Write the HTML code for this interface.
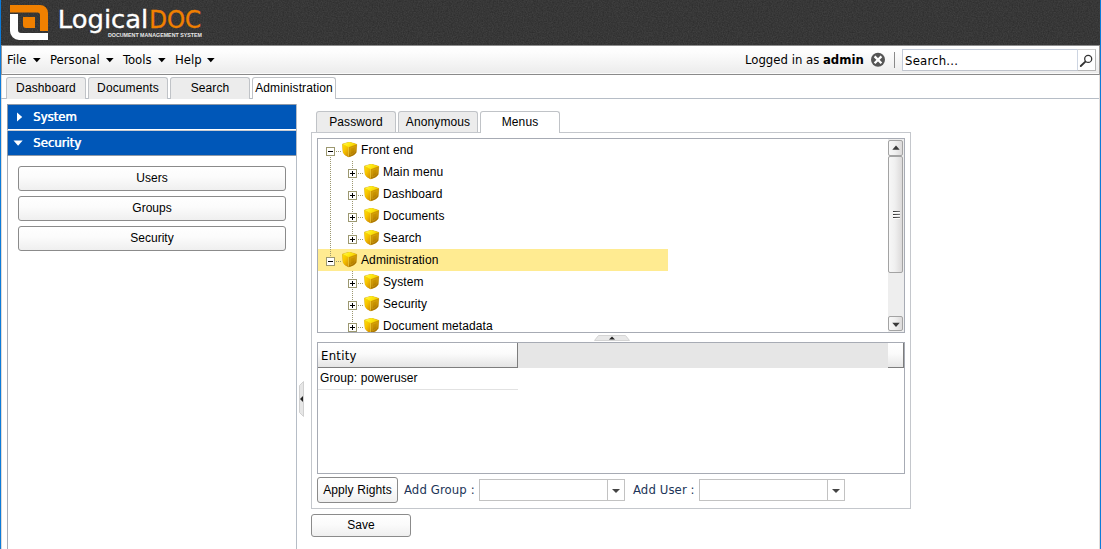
<!DOCTYPE html>
<html>
<head>
<meta charset="utf-8">
<title>LogicalDOC</title>
<style>
html,body{margin:0;padding:0;}
body{width:1101px;height:549px;overflow:hidden;background:#fff;position:relative;
  font-family:"Liberation Sans",Arial,sans-serif;font-size:12px;color:#000;}
.abs{position:absolute;box-sizing:border-box;}
.tah{font-family:"DejaVu Sans Condensed","DejaVu Sans","Liberation Sans",sans-serif;}
#edgeL{left:0;top:0;width:1px;height:549px;background:#0c7bd9;}
#edgeR{left:1100px;top:0;width:1px;height:549px;background:#0c7bd9;}
#hdr{left:1px;top:0;width:1099px;height:45px;background:#373737;}
#menubar{left:1px;top:45px;width:1099px;height:30px;border-top:1px solid #8c8c8c;background:linear-gradient(#ffffff 0%,#fcfcfc 25%,#f4f4f4 62%,#ececec 96%,#fafafa 97%,#fafafa 100%);border-bottom:1px solid #8a8a8a;}
.mi{top:52px;font-size:13px;line-height:15px;white-space:nowrap;color:#000;}
.arr{width:0;height:0;border-left:3.5px solid transparent;border-right:3.5px solid transparent;border-top:4px solid #000;}
.tab{letter-spacing:0.12px;height:22px;border:1px solid #c0c3c7;border-bottom:none;border-radius:3px 3px 0 0;background:#ececec;text-align:center;font-size:12px;line-height:21px;white-space:nowrap;}
.tab.sel{background:#fff;}
.btn{border:1px solid #8b8b8b;border-radius:3px;background:linear-gradient(#ffffff 0%,#fbfbfb 45%,#efefef 100%);text-align:center;font-size:12px;white-space:nowrap;}
.sec{left:7px;width:289px;background:#0057b8;color:#fff;font-size:13px;line-height:24px;border-left:1px solid #8e99a8;}
.sec span{position:absolute;left:25px;top:0;text-shadow:0.6px 0 0 #fff;}
.row{left:318px;width:570px;height:22px;}
.tl{letter-spacing:0.1px;font-size:12px;line-height:22px;white-space:nowrap;}
.op{width:9px;height:9px;border:1px solid #9c9870;background:#fff;}
.op i{position:absolute;left:1px;top:3px;width:5px;height:1px;background:#000;}
.op b{position:absolute;left:3px;top:1px;width:1px;height:5px;background:#000;}
.dv{width:1px;background:repeating-linear-gradient(180deg,#9c9870 0,#9c9870 1px,transparent 1px,transparent 2px);}
.dh{height:1px;background:repeating-linear-gradient(90deg,#9c9870 0,#9c9870 1px,transparent 1px,transparent 2px);}
</style>
</head>
<body>
<div class="abs" id="edgeL"></div>
<div class="abs" id="edgeR"></div>
<div class="abs" style="left:1099px;top:0;width:1px;height:549px;background:#e2dcd9"></div>
<div class="abs" style="left:1px;top:46px;width:1px;height:503px;background:#e0d9d5"></div>
<div class="abs" id="hdr"></div>
<svg class="abs" style="left:1px;top:0" width="1099" height="45"><filter id="nz" x="0" y="0" width="100%" height="100%" color-interpolation-filters="sRGB"><feTurbulence type="fractalNoise" baseFrequency="0.8" numOctaves="2" seed="3"/><feColorMatrix type="matrix" values="0.11 0 0 0 0.162  0.11 0 0 0 0.162  0.11 0 0 0 0.162  0 0 0 0 1"/></filter><rect width="1099" height="45" fill="#373737"/><rect width="1099" height="45" filter="url(#nz)"/></svg>
<svg class="abs" style="left:0;top:0" width="220" height="45" viewBox="0 0 220 45">
<path d="M10 5 H40 A8 8 0 0 1 48 13 V31 H40 V15 A2.5 2.5 0 0 0 37.5 12.5 H10 Z" fill="#f08000"/>
<path d="M10 14 H18 V30 A3 3 0 0 0 21 33 H48 V40 H19 A9 9 0 0 1 10 31 Z" fill="#ffffff"/>
<path d="M23 17 H35 V28 H26 A3 3 0 0 1 23 25 Z" fill="#f08000"/>
<text x="57.8" y="28.4" font-family="DejaVu Sans, Liberation Sans, sans-serif" font-size="25" fill="#ffffff" stroke="#ffffff" stroke-width="0.35" textLength="90.5" lengthAdjust="spacingAndGlyphs">Logical</text>
<text x="149.2" y="28.4" font-family="DejaVu Sans, Liberation Sans, sans-serif" font-size="25" fill="#f08000" stroke="#f08000" stroke-width="0.35" textLength="52" lengthAdjust="spacingAndGlyphs">DOC</text>
<text x="108" y="37" font-family="Liberation Sans, sans-serif" font-weight="bold" font-size="5.2" fill="#e8e8e8" textLength="94" lengthAdjust="spacingAndGlyphs">DOCUMENT MANAGEMENT SYSTEM</text>
</svg>
<div class="abs" id="menubar"></div>
<div class="abs" style="left:1px;top:46px;width:1px;height:29px;background:#9a9694"></div><div class="abs" style="left:1099px;top:46px;width:1px;height:29px;background:#9a9694"></div>
<div class="abs mi tah" style="left:7px">File</div><svg class="abs" style="left:33px;top:58px" width="8" height="5" viewBox="0 0 8 5"><path d="M0 0 H7.6 L3.8 4.2 Z" fill="#000"/></svg>
<div class="abs mi tah" style="left:50px">Personal</div><svg class="abs" style="left:106px;top:58px" width="8" height="5" viewBox="0 0 8 5"><path d="M0 0 H7.6 L3.8 4.2 Z" fill="#000"/></svg>
<div class="abs mi tah" style="left:123px">Tools</div><svg class="abs" style="left:158px;top:58px" width="8" height="5" viewBox="0 0 8 5"><path d="M0 0 H7.6 L3.8 4.2 Z" fill="#000"/></svg>
<div class="abs mi tah" style="left:175px">Help</div><svg class="abs" style="left:207px;top:58px" width="8" height="5" viewBox="0 0 8 5"><path d="M0 0 H7.6 L3.8 4.2 Z" fill="#000"/></svg>
<div class="abs mi tah" style="left:745px">Logged in as <b>admin</b></div>
<svg class="abs" style="left:870px;top:52px" width="16" height="16" viewBox="0 0 16 16"><circle cx="8" cy="7.8" r="7" fill="#555"/><path d="M4.6 4.4 L11.4 11.2 M11.4 4.4 L4.6 11.2" stroke="#fff" stroke-width="2.3" stroke-linecap="butt"/></svg>
<div class="abs" style="left:894px;top:52px;width:1px;height:16px;background:#8a8a8a"></div>
<div class="abs" style="left:902px;top:49px;width:194px;height:22px;border:1px solid #c3cbd8;border-right-color:#b0b0b0;border-bottom-color:#c0c4cc;background:#fff"></div>
<div class="abs mi tah" style="left:905px;top:53px;letter-spacing:0.2px">Search...</div>
<div class="abs" style="left:1077px;top:49px;width:19px;height:22px;border:1px solid #b4b4b4;border-left-color:#cdd5e2;border-top-color:#cfcfcf;background:#fff"></div>
<svg class="abs" style="left:1078px;top:52px" width="16" height="16" viewBox="0 0 16 16"><circle cx="10.2" cy="6.9" r="3.5" fill="#fff" stroke="#333" stroke-width="1.3"/><path d="M7.4 9.6 L2.8 14" stroke="#333" stroke-width="1.9" stroke-linecap="round"/></svg>

<div class="abs" style="left:1px;top:98px;width:1098px;height:1px;background:#b6bdc6"></div>
<div class="abs tab" style="left:6px;top:77px;width:80px">Dashboard</div>
<div class="abs tab" style="left:88px;top:77px;width:80px">Documents</div>
<div class="abs tab" style="left:170px;top:77px;width:80px">Search</div>
<div class="abs tab sel" style="left:252px;top:77px;width:84px">Administration</div>

<div class="abs" style="left:7px;top:104px;width:290px;height:445px;border-left:1px solid #a9aeb9;border-right:1px solid #b6bdc6"></div>
<div class="abs sec tah" style="top:104px;height:25px;border-top:1px solid #8e99a8"><svg class="abs" style="left:8px;top:6px" width="8" height="12"><path d="M1 1.5 L6.2 6 L1 10.5 Z" fill="#fff"/></svg><span>System</span></div>
<div class="abs" style="left:7px;top:130px;width:289px;height:1px;background:#c8ccd2"></div>
<div class="abs sec tah" style="top:131px;height:25px;border-bottom:1px solid #8e99a8"><svg class="abs" style="left:5px;top:9px" width="11" height="7"><path d="M0.5 0.5 L9.7 0.5 L5.1 5.7 Z" fill="#fff"/></svg><span>Security</span></div>
<div class="abs btn" style="left:18px;top:166px;width:268px;height:25px;line-height:23px">Users</div>
<div class="abs btn" style="left:18px;top:196px;width:268px;height:25px;line-height:23px">Groups</div>
<div class="abs btn" style="left:18px;top:226px;width:268px;height:25px;line-height:23px">Security</div>
<svg class="abs" style="left:298px;top:380px" width="8" height="38" viewBox="0 0 8 38"><path d="M1.5 5.5 L5.5 1.5 V36.5 L1.5 32.5 Z" fill="#e6e6e6" stroke="#d0d0d0" stroke-width="1"/><path d="M5 16 V22 L2 19 Z" fill="#222"/></svg>
<svg width="0" height="0" style="position:absolute"><defs>
<linearGradient id="cl" x1="0" y1="0" x2="0.7" y2="1"><stop offset="0" stop-color="#ffe100"/><stop offset="0.5" stop-color="#f6c300"/><stop offset="1" stop-color="#d99600"/></linearGradient>
<linearGradient id="cr" x1="0" y1="0" x2="0.4" y2="1"><stop offset="0" stop-color="#d9a400"/><stop offset="0.6" stop-color="#c48e00"/><stop offset="1" stop-color="#a06c00"/></linearGradient>
<linearGradient id="ct" x1="0" y1="0" x2="1" y2="0.3"><stop offset="0" stop-color="#fff65e"/><stop offset="0.5" stop-color="#ffec14"/><stop offset="1" stop-color="#f4cc00"/></linearGradient>
<g id="cube"><path d="M0.4 2 L7.4 0 L14.8 2.3 L14.2 10.4 Q12.4 13.6 6.5 15 Q2.2 13.2 1 10.2 Z" fill="#c89000" stroke="#c08c10" stroke-width="0.5" stroke-opacity="0.55"/><path d="M0.4 2 L6.6 5 L6.6 15 Q2.2 13.2 1 10.2 Z" fill="url(#cl)"/><path d="M6.4 5 L14.8 2.3 L14.2 10.4 Q12.4 13.6 6.4 15 Z" fill="url(#cr)"/><path d="M8.2 6.2 L13.4 4.5 L12.9 9.8 Q11.5 12 8.2 13 Z" fill="none" stroke="#e2b425" stroke-width="0.5" opacity="0.7"/><path d="M0.4 2 L7.4 0 L14.8 2.3 L6.5 5.2 Z" fill="url(#ct)"/><path d="M6.5 5.2 V14.6" stroke="#ffe45a" stroke-width="0.7" fill="none" opacity="0.75"/></g>
</defs></svg>

<div class="abs tab" style="left:316px;top:111px;width:80px">Password</div>
<div class="abs tab" style="left:398px;top:111px;width:80px">Anonymous</div>
<div class="abs" style="left:311px;top:132px;width:600px;height:377px;border:1px solid #c4c7cc"></div>
<div class="abs tab sel" style="left:480px;top:111px;width:80px;height:22px">Menus</div>
<div class="abs" id="tree" style="left:317px;top:138px;width:588px;height:195px;border:1px solid #a7abb4;overflow:hidden">
<div class="abs op" style="left:8px;top:8px"><i></i></div>
<svg class="abs" style="left:24px;top:3px" width="16" height="16" viewBox="0 0 16 16"><use href="#cube"/></svg>
<div class="abs tl" style="left:43px;top:0px">Front end</div>
<div class="abs op" style="left:30px;top:30px"><i></i><b></b></div>
<svg class="abs" style="left:46px;top:25px" width="16" height="16" viewBox="0 0 16 16"><use href="#cube"/></svg>
<div class="abs tl" style="left:65px;top:22px">Main menu</div>
<div class="abs op" style="left:30px;top:52px"><i></i><b></b></div>
<svg class="abs" style="left:46px;top:47px" width="16" height="16" viewBox="0 0 16 16"><use href="#cube"/></svg>
<div class="abs tl" style="left:65px;top:44px">Dashboard</div>
<div class="abs op" style="left:30px;top:74px"><i></i><b></b></div>
<svg class="abs" style="left:46px;top:69px" width="16" height="16" viewBox="0 0 16 16"><use href="#cube"/></svg>
<div class="abs tl" style="left:65px;top:66px">Documents</div>
<div class="abs op" style="left:30px;top:96px"><i></i><b></b></div>
<svg class="abs" style="left:46px;top:91px" width="16" height="16" viewBox="0 0 16 16"><use href="#cube"/></svg>
<div class="abs tl" style="left:65px;top:88px">Search</div>
<div class="abs" style="left:0;top:110px;width:350px;height:22px;background:#ffeb91"></div>
<div class="abs op" style="left:8px;top:118px"><i></i></div>
<svg class="abs" style="left:24px;top:113px" width="16" height="16" viewBox="0 0 16 16"><use href="#cube"/></svg>
<div class="abs tl" style="left:43px;top:110px">Administration</div>
<div class="abs op" style="left:30px;top:140px"><i></i><b></b></div>
<svg class="abs" style="left:46px;top:135px" width="16" height="16" viewBox="0 0 16 16"><use href="#cube"/></svg>
<div class="abs tl" style="left:65px;top:132px">System</div>
<div class="abs op" style="left:30px;top:162px"><i></i><b></b></div>
<svg class="abs" style="left:46px;top:157px" width="16" height="16" viewBox="0 0 16 16"><use href="#cube"/></svg>
<div class="abs tl" style="left:65px;top:154px">Security</div>
<div class="abs op" style="left:30px;top:184px"><i></i><b></b></div>
<svg class="abs" style="left:46px;top:179px" width="16" height="16" viewBox="0 0 16 16"><use href="#cube"/></svg>
<div class="abs tl" style="left:65px;top:176px">Document metadata</div>
<div class="abs dh" style="left:18px;top:12px;width:5px"></div>
<div class="abs dh" style="left:40px;top:34px;width:5px"></div>
<div class="abs dh" style="left:40px;top:56px;width:5px"></div>
<div class="abs dh" style="left:40px;top:78px;width:5px"></div>
<div class="abs dh" style="left:40px;top:100px;width:5px"></div>
<div class="abs dh" style="left:18px;top:122px;width:5px"></div>
<div class="abs dh" style="left:40px;top:144px;width:5px"></div>
<div class="abs dh" style="left:40px;top:166px;width:5px"></div>
<div class="abs dh" style="left:40px;top:188px;width:5px"></div>
<div class="abs dv" style="left:12px;top:18px;height:99px"></div>
<div class="abs dv" style="left:34px;top:22px;height:8px"></div>
<div class="abs dv" style="left:34px;top:40px;height:3px"></div>
<div class="abs dv" style="left:34px;top:44px;height:8px"></div>
<div class="abs dv" style="left:34px;top:62px;height:3px"></div>
<div class="abs dv" style="left:34px;top:66px;height:8px"></div>
<div class="abs dv" style="left:34px;top:84px;height:3px"></div>
<div class="abs dv" style="left:34px;top:88px;height:8px"></div>
<div class="abs dv" style="left:34px;top:132px;height:8px"></div>
<div class="abs dv" style="left:34px;top:150px;height:3px"></div>
<div class="abs dv" style="left:34px;top:154px;height:8px"></div>
<div class="abs dv" style="left:34px;top:172px;height:3px"></div>
<div class="abs dv" style="left:34px;top:176px;height:8px"></div>
<div class="abs dv" style="left:34px;top:194px;height:3px"></div>
<div class="abs" style="left:570px;top:0;width:16px;height:193px;background:#eeeeee"></div>
<div class="abs" style="left:570px;top:1px;width:15px;height:16px;border:1px solid #a3a3a3;border-radius:2px;background:linear-gradient(90deg,#f7f7f7 0%,#f0f0f0 45%,#dcdada 100%)"></div>
<svg class="abs" style="left:574px;top:6px" width="8" height="6" viewBox="0 0 8 6"><path d="M0.3 4.8 L4 0.6 L7.7 4.8 Z" fill="#3a3a3a"/></svg>
<div class="abs" style="left:570px;top:17px;width:15px;height:117px;border:1px solid #a3a3a3;border-radius:2px;background:linear-gradient(90deg,#f7f7f7 0%,#f0f0f0 45%,#dcdada 100%)"></div>
<div class="abs" style="left:575px;top:72px;width:7px;height:1px;background:linear-gradient(90deg,#333,#777)"></div>
<div class="abs" style="left:575px;top:73px;width:7px;height:1px;background:#fff"></div>
<div class="abs" style="left:575px;top:75px;width:7px;height:1px;background:linear-gradient(90deg,#333,#777)"></div>
<div class="abs" style="left:575px;top:76px;width:7px;height:1px;background:#fff"></div>
<div class="abs" style="left:575px;top:78px;width:7px;height:1px;background:linear-gradient(90deg,#333,#777)"></div>
<div class="abs" style="left:575px;top:79px;width:7px;height:1px;background:#fff"></div>
<div class="abs" style="left:570px;top:177px;width:15px;height:15px;border:1px solid #a3a3a3;border-radius:2px;background:linear-gradient(90deg,#f7f7f7 0%,#f0f0f0 45%,#dcdada 100%)"></div>
<svg class="abs" style="left:574px;top:183px" width="8" height="6" viewBox="0 0 8 6"><path d="M0.3 0.8 L4 5 L7.7 0.8 Z" fill="#3a3a3a"/></svg>
</div>
<svg class="abs" style="left:592px;top:333px" width="40" height="9" viewBox="0 0 40 9"><path d="M2.5 7.5 L6.5 2.5 H33.5 L37.5 7.5 Z" fill="#e8e8e8" stroke="#d4d4d4" stroke-width="1"/><path d="M17 6.5 H23 L20 3.5 Z" fill="#222"/></svg>
<div class="abs" id="grid" style="left:317px;top:342px;width:588px;height:132px;border:1px solid #a7abb4;overflow:hidden">
<div class="abs" style="left:0;top:0;width:586px;height:25px;background:#e6e6e6"></div>
<div class="abs tah" style="left:0;top:0;width:200px;height:25px;background:linear-gradient(#ffffff 0%,#fbfbfb 45%,#e4e4e4 100%);border-right:1px solid #7d7d7d;border-bottom:1px solid #7d7d7d;font-size:13px;line-height:26px;padding-left:3px;letter-spacing:0.25px">Entity</div>
<div class="abs" style="left:570px;top:0;width:16px;height:25px;background:linear-gradient(#ffffff 0%,#fbfbfb 45%,#e6e6e6 100%);border-right:1px solid #7d7d7d;border-bottom:1px solid #7d7d7d"></div>
<div class="abs tl" style="left:2px;top:25px;width:198px;height:22px;line-height:21px">Group: poweruser</div>
<div class="abs" style="left:0;top:46px;width:200px;height:1px;background:#e2e2e2"></div>
</div>
<div class="abs btn" style="left:317px;top:477px;width:81px;height:26px;line-height:24px;letter-spacing:0.1px">Apply Rights</div>
<div class="abs mi tah" style="left:404px;top:482px;color:#1c3558;letter-spacing:0.1px">Add Group :</div>
<div class="abs" style="left:479px;top:479px;width:146px;height:22px;border:1px solid #c2c2c2;background:#fff"></div>
<div class="abs" style="left:607px;top:480px;width:1px;height:20px;background:#c2c2c2"></div>
<div class="abs arr" style="left:612px;top:489px;border-top-color:#444;border-left-width:4px;border-right-width:4px"></div>
<div class="abs mi tah" style="left:633px;top:482px;color:#1c3558;letter-spacing:0.1px">Add User :</div>
<div class="abs" style="left:699px;top:479px;width:146px;height:22px;border:1px solid #c2c2c2;background:#fff"></div>
<div class="abs" style="left:827px;top:480px;width:1px;height:20px;background:#c2c2c2"></div>
<div class="abs arr" style="left:832px;top:489px;border-top-color:#444;border-left-width:4px;border-right-width:4px"></div>
<div class="abs btn" style="left:311px;top:514px;width:100px;height:23px;line-height:21px">Save</div>

</body>
</html>
